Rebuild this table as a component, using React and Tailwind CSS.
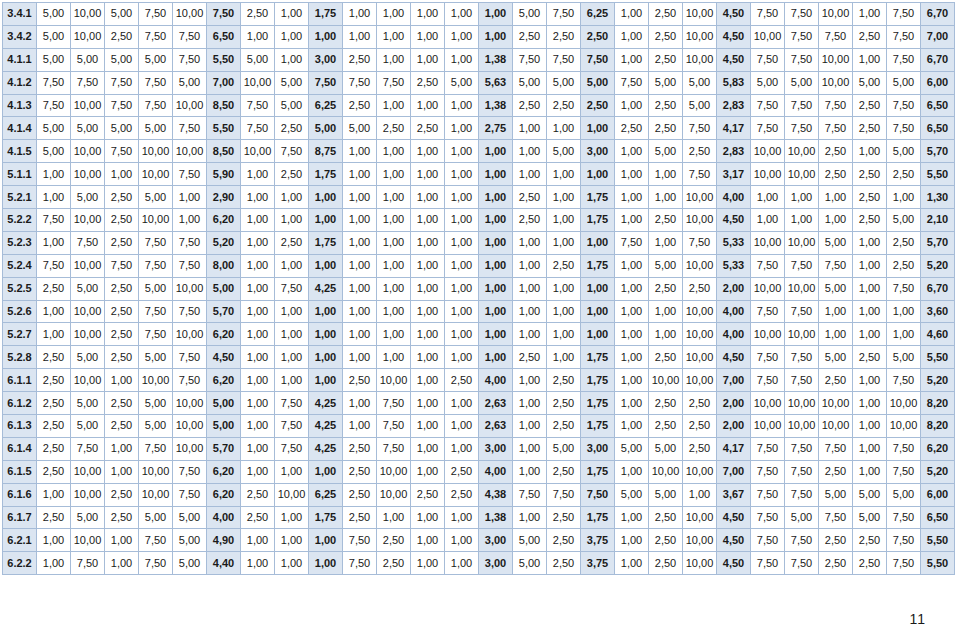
import React from 'react';

// rows: label, then 27 values; summary columns are bold + tinted
const rows = [
  ['3.4.1', '5,00 10,00 5,00 7,50 10,00 7,50 2,50 1,00 1,75 1,00 1,00 1,00 1,00 1,00 5,00 7,50 6,25 1,00 2,50 10,00 4,50 7,50 7,50 10,00 1,00 7,50 6,70'],
  ['3.4.2', '5,00 10,00 2,50 7,50 7,50 6,50 1,00 1,00 1,00 1,00 1,00 1,00 1,00 1,00 2,50 2,50 2,50 1,00 2,50 10,00 4,50 10,00 7,50 7,50 2,50 7,50 7,00'],
  ['4.1.1', '5,00 5,00 5,00 5,00 7,50 5,50 5,00 1,00 3,00 2,50 1,00 1,00 1,00 1,38 7,50 7,50 7,50 1,00 2,50 10,00 4,50 7,50 7,50 10,00 1,00 7,50 6,70'],
  ['4.1.2', '7,50 7,50 7,50 7,50 5,00 7,00 10,00 5,00 7,50 7,50 7,50 2,50 5,00 5,63 5,00 5,00 5,00 7,50 5,00 5,00 5,83 5,00 5,00 10,00 5,00 5,00 6,00'],
  ['4.1.3', '7,50 10,00 7,50 7,50 10,00 8,50 7,50 5,00 6,25 2,50 1,00 1,00 1,00 1,38 2,50 2,50 2,50 1,00 2,50 5,00 2,83 7,50 7,50 7,50 2,50 7,50 6,50'],
  ['4.1.4', '5,00 5,00 5,00 5,00 7,50 5,50 7,50 2,50 5,00 5,00 2,50 2,50 1,00 2,75 1,00 1,00 1,00 2,50 2,50 7,50 4,17 7,50 7,50 7,50 2,50 7,50 6,50'],
  ['4.1.5', '5,00 10,00 7,50 10,00 10,00 8,50 10,00 7,50 8,75 1,00 1,00 1,00 1,00 1,00 1,00 5,00 3,00 1,00 5,00 2,50 2,83 10,00 10,00 2,50 1,00 5,00 5,70'],
  ['5.1.1', '1,00 10,00 1,00 10,00 7,50 5,90 1,00 2,50 1,75 1,00 1,00 1,00 1,00 1,00 1,00 1,00 1,00 1,00 1,00 7,50 3,17 10,00 10,00 2,50 2,50 2,50 5,50'],
  ['5.2.1', '1,00 5,00 2,50 5,00 1,00 2,90 1,00 1,00 1,00 1,00 1,00 1,00 1,00 1,00 2,50 1,00 1,75 1,00 1,00 10,00 4,00 1,00 1,00 1,00 2,50 1,00 1,30'],
  ['5.2.2', '7,50 10,00 2,50 10,00 1,00 6,20 1,00 1,00 1,00 1,00 1,00 1,00 1,00 1,00 2,50 1,00 1,75 1,00 2,50 10,00 4,50 1,00 1,00 1,00 2,50 5,00 2,10'],
  ['5.2.3', '1,00 7,50 2,50 7,50 7,50 5,20 1,00 2,50 1,75 1,00 1,00 1,00 1,00 1,00 1,00 1,00 1,00 7,50 1,00 7,50 5,33 10,00 10,00 5,00 1,00 2,50 5,70'],
  ['5.2.4', '7,50 10,00 7,50 7,50 7,50 8,00 1,00 1,00 1,00 1,00 1,00 1,00 1,00 1,00 1,00 2,50 1,75 1,00 5,00 10,00 5,33 7,50 7,50 7,50 1,00 2,50 5,20'],
  ['5.2.5', '2,50 5,00 2,50 5,00 10,00 5,00 1,00 7,50 4,25 1,00 1,00 1,00 1,00 1,00 1,00 1,00 1,00 1,00 2,50 2,50 2,00 10,00 10,00 5,00 1,00 7,50 6,70'],
  ['5.2.6', '1,00 10,00 2,50 7,50 7,50 5,70 1,00 1,00 1,00 1,00 1,00 1,00 1,00 1,00 1,00 1,00 1,00 1,00 1,00 10,00 4,00 7,50 7,50 1,00 1,00 1,00 3,60'],
  ['5.2.7', '1,00 10,00 2,50 7,50 10,00 6,20 1,00 1,00 1,00 1,00 1,00 1,00 1,00 1,00 1,00 1,00 1,00 1,00 1,00 10,00 4,00 10,00 10,00 1,00 1,00 1,00 4,60'],
  ['5.2.8', '2,50 5,00 2,50 5,00 7,50 4,50 1,00 1,00 1,00 1,00 1,00 1,00 1,00 1,00 2,50 1,00 1,75 1,00 2,50 10,00 4,50 7,50 7,50 5,00 2,50 5,00 5,50'],
  ['6.1.1', '2,50 10,00 1,00 10,00 7,50 6,20 1,00 1,00 1,00 2,50 10,00 1,00 2,50 4,00 1,00 2,50 1,75 1,00 10,00 10,00 7,00 7,50 7,50 2,50 1,00 7,50 5,20'],
  ['6.1.2', '2,50 5,00 2,50 5,00 10,00 5,00 1,00 7,50 4,25 1,00 7,50 1,00 1,00 2,63 1,00 2,50 1,75 1,00 2,50 2,50 2,00 10,00 10,00 10,00 1,00 10,00 8,20'],
  ['6.1.3', '2,50 5,00 2,50 5,00 10,00 5,00 1,00 7,50 4,25 1,00 7,50 1,00 1,00 2,63 1,00 2,50 1,75 1,00 2,50 2,50 2,00 10,00 10,00 10,00 1,00 10,00 8,20'],
  ['6.1.4', '2,50 7,50 1,00 7,50 10,00 5,70 1,00 7,50 4,25 2,50 7,50 1,00 1,00 3,00 1,00 5,00 3,00 5,00 5,00 2,50 4,17 7,50 7,50 7,50 1,00 7,50 6,20'],
  ['6.1.5', '2,50 10,00 1,00 10,00 7,50 6,20 1,00 1,00 1,00 2,50 10,00 1,00 2,50 4,00 1,00 2,50 1,75 1,00 10,00 10,00 7,00 7,50 7,50 2,50 1,00 7,50 5,20'],
  ['6.1.6', '1,00 10,00 2,50 10,00 7,50 6,20 2,50 10,00 6,25 2,50 10,00 2,50 2,50 4,38 7,50 7,50 7,50 5,00 5,00 1,00 3,67 7,50 7,50 5,00 5,00 5,00 6,00'],
  ['6.1.7', '2,50 5,00 2,50 5,00 5,00 4,00 2,50 1,00 1,75 2,50 1,00 1,00 1,00 1,38 1,00 2,50 1,75 1,00 2,50 10,00 4,50 7,50 5,00 7,50 5,00 7,50 6,50'],
  ['6.2.1', '1,00 10,00 1,00 7,50 5,00 4,90 1,00 1,00 1,00 7,50 2,50 1,00 1,00 3,00 5,00 2,50 3,75 1,00 2,50 10,00 4,50 7,50 7,50 2,50 2,50 7,50 5,50'],
  ['6.2.2', '1,00 7,50 1,00 7,50 5,00 4,40 1,00 1,00 1,00 7,50 2,50 1,00 1,00 3,00 5,00 2,50 3,75 1,00 2,50 10,00 4,50 7,50 7,50 2,50 2,50 7,50 5,50'],
];

// indexes (0-based among the 27 values) of the summary columns
const summaryCols = [5, 8, 13, 16, 20, 26];

const App = () => {
  return (
    <div className="w-[960px] h-[626px] bg-white font-['Liberation_Sans',Arial,sans-serif] text-[#1a1a1a] overflow-hidden">
      <div className="pt-[2px] pl-[2px]">
        <table className="table-fixed border-collapse w-[952px] text-[11px] leading-none">
          <tbody>
            {rows.map(([label, values]) => (
              <tr key={label} className="h-[22.9px]">
                <td className="w-[34px] border border-[#a6bcd8] bg-[#dbe5f1] text-center font-bold">{label}</td>
                {values.split(' ').map((v, i) =>
                  summaryCols.includes(i) ? (
                    <td key={i} className="w-[34px] border border-[#a6bcd8] bg-[#dbe5f1] text-center font-bold">{v}</td>
                  ) : (
                    <td key={i} className="w-[34px] border border-[#a6bcd8] text-center">{v}</td>
                  )
                )}
              </tr>
            ))}
          </tbody>
        </table>
      </div>
      <div className="flex justify-end pr-[34px] mt-[36px] text-[14px] leading-[16px] tracking-[1px]">11</div>
    </div>
  );
};

export default App;
